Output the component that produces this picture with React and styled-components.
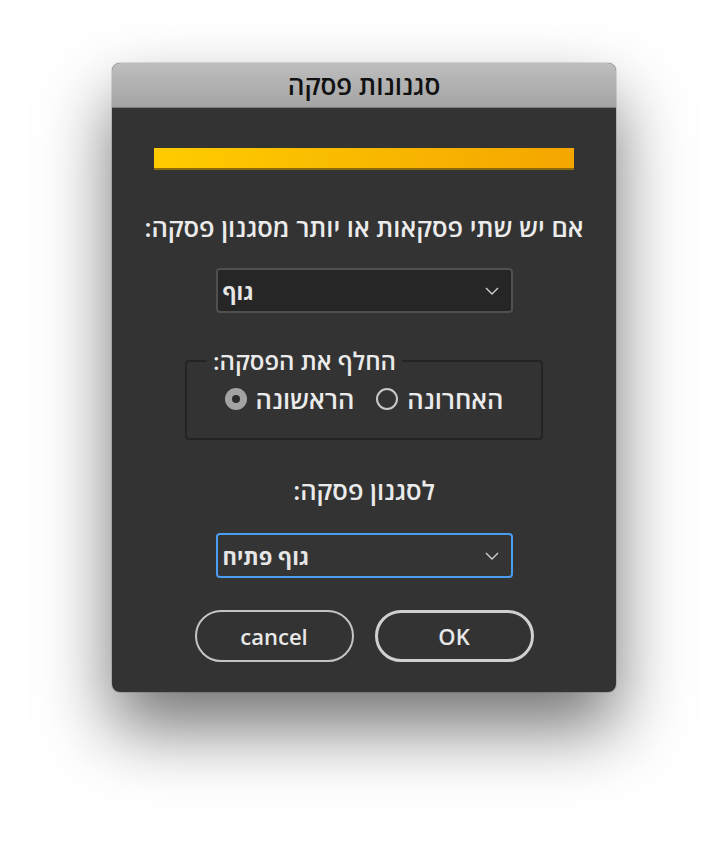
import React from "react";
import styled, {createGlobalStyle} from "styled-components";

const GlobalStyle = createGlobalStyle`
  html, body {
    margin: 0;
    padding: 0;
    background: #ffffff;
  }
  body {
    font-family: "Open Sans", "Liberation Sans", "DejaVu Sans", sans-serif;
  }
`;

const Page = styled.div`
  width: 728px;
  height: 852px;
  padding-top: 63px;
  box-sizing: border-box;
  display: flex;
  justify-content: center;
`;

const Dialog = styled.div`
  width: 504px;
  height: 629px;
  background: #333333;
  border-radius: 8px;
  overflow: hidden;
  display: flex;
  flex-direction: column;
  align-items: center;
  box-shadow: 0 0 0 1px rgba(0, 0, 0, 0.12), 0 36px 70px rgba(0, 0, 0, 0.55);
`;

const TitleBar = styled.div`
  align-self: stretch;
  height: 44px;
  background: linear-gradient(#bebebe, #a4a4a4);
  border-bottom: 1px solid #7c7c7c;
  display: flex;
  align-items: center;
  justify-content: center;
  font-size: 26px;
  font-weight: 600;
  color: #111;
`;

const ProgressBar = styled.div`
  width: 420px;
  height: 20px;
  margin-top: 40px;
  background: linear-gradient(90deg, #ffcc00, #f4a600);
  border-bottom: 2px solid #8a6a10;
`;

const Heading = styled.div`
  margin-top: ${p => p.$top}px;
  font-size: 25.5px;
  font-weight: 600;
  color: #ebebeb;
  line-height: 28px;
  direction: rtl;
`;

const Select = styled.div`
  width: 297px;
  height: 45px;
  box-sizing: border-box;
  margin-top: ${p => p.$top}px;
  border-radius: 4px;
  border: ${p => (p.$focused ? "2px solid #4b9df2" : "2px solid #505050")};
  background: ${p => (p.$focused ? "#343434" : "#262626")};
  display: flex;
  align-items: center;
  justify-content: space-between;
  padding: 0 12px 0 5px;
  font-size: 22px;
  font-weight: 700;
  color: #e6e6e6;
`;

const Chevron = () => (
  <svg width="14" height="8" viewBox="0 0 14 8">
    <path d="M1 1 L7 7 L13 1" fill="none" stroke="#cfcfcf" strokeWidth="1.4"/>
  </svg>
);

const Fieldset = styled.fieldset`
  width: 358px;
  height: 92px;
  box-sizing: border-box;
  margin: 35px 0 0;
  padding: 10px 0 0;
  border: 2px solid #232323;
  border-radius: 4px;
  display: flex;
  justify-content: center;
`;

const Legend = styled.legend`
  margin-left: 20px;
  padding: 0 6px;
  font-size: 24px;
  font-weight: 600;
  color: #ebebeb;
  line-height: 26px;
  direction: rtl;
`;

const RadioRow = styled.div`
  display: flex;
  align-items: center;
  height: 30px;
`;

const RadioItem = styled.div`
  display: flex;
  align-items: center;
  gap: 9px;
  font-size: 25.5px;
  font-weight: 600;
  color: #ebebeb;
  margin-left: ${p => p.$gap || 0}px;
`;

const Radio = styled.span`
  width: 22px;
  height: 22px;
  box-sizing: border-box;
  border-radius: 50%;
  display: inline-flex;
  align-items: center;
  justify-content: center;
  border: ${p => (p.$checked ? "none" : "2px solid #c8c8c8")};
  background: ${p => (p.$checked ? "#a3a3a3" : "transparent")};
  &::after {
    content: "";
    display: ${p => (p.$checked ? "block" : "none")};
    width: 8px;
    height: 8px;
    border-radius: 50%;
    background: #2c2c2c;
  }
`;

const Buttons = styled.div`
  display: flex;
  gap: 21px;
  margin-top: 32px;
`;

const Button = styled.div`
  width: 159px;
  height: 52px;
  box-sizing: border-box;
  border-radius: 26px;
  border: ${p => (p.$primary ? "3px solid #d0d0d0" : "2px solid #c4c4c4")};
  display: flex;
  align-items: center;
  justify-content: center;
  font-size: 22px;
  font-weight: 600;
  color: #e8e8e8;
`;

export default function App() {
  return (
    <>
      <GlobalStyle/>
      <Page>
        <Dialog>
          <TitleBar>סגנונות פסקה</TitleBar>
          <ProgressBar/>
          <Heading $top={43}>אם יש שתי פסקאות או יותר מסגנון פסקה:</Heading>
          <Select $top={27}>
            <span>גוף</span>
            <Chevron/>
          </Select>
          <Fieldset>
            <Legend>החלף את הפסקה:</Legend>
            <RadioRow>
              <RadioItem>
                <Radio $checked/>
                <span>הראשונה</span>
              </RadioItem>
              <RadioItem $gap={22}>
                <Radio/>
                <span>האחרונה</span>
              </RadioItem>
            </RadioRow>
          </Fieldset>
          <Heading $top={36}>לסגנון פסקה:</Heading>
          <Select $top={29} $focused>
            <span>גוף פתיח</span>
            <Chevron/>
          </Select>
          <Buttons>
            <Button>cancel</Button>
            <Button $primary>OK</Button>
          </Buttons>
        </Dialog>
      </Page>
    </>
  );
}
